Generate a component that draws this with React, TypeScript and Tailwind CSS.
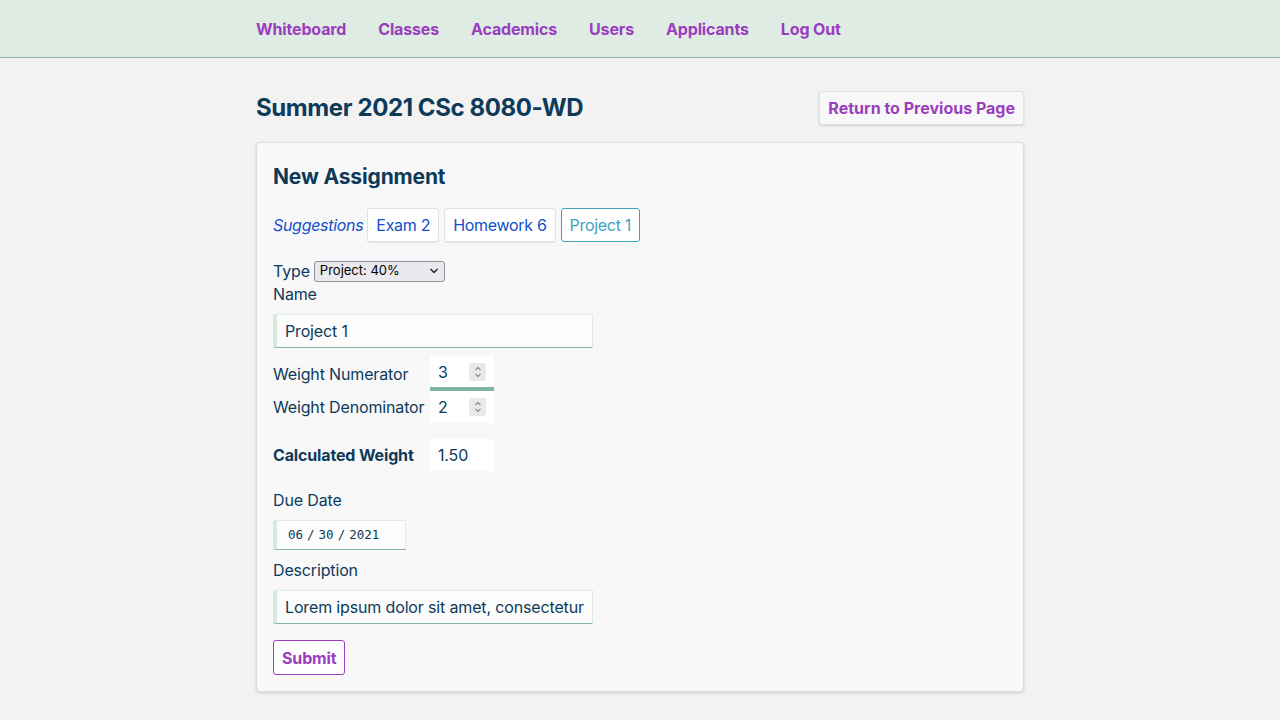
import React from "react";

const font = { fontFamily: "Inter, 'Noto Sans', sans-serif" };

function Spinner() {
  return (
    <div className="w-[17px] h-[18px] bg-[#e9e9ed] rounded-[2px] flex items-center justify-center">
      <svg width="10" height="14" viewBox="0 0 10 14" fill="none" stroke="#8a8a8a" strokeWidth="1.1">
        <path d="M2.5 5 L5 2.5 L7.5 5" />
        <path d="M2.5 9 L5 11.5 L7.5 9" />
      </svg>
    </div>
  );
}

export default function App() {
  const nav = ["Whiteboard", "Classes", "Academics", "Users", "Applicants", "Log Out"];
  return (
    <div className="min-h-[720px] bg-[#f2f2f2] text-[#0e3a5a] tracking-[-0.15px]" style={font}>
      <header className="h-[58px] bg-[#dfece3] border-b border-[#8fb5a8]">
        <nav className="w-[768px] mx-auto flex items-center h-full gap-[32px]">
          {nav.map((n) => (
            <span key={n} className="text-[#9a3dbf] font-bold text-[16px]">{n}</span>
          ))}
        </nav>
      </header>

      <main className="w-[768px] mx-auto">
        <div className="flex items-center justify-between mt-[32px] h-[36px]">
          <h1 className="text-[24px] font-bold text-[#0e3a5a] tracking-[-0.4px]">Summer 2021 CSc 8080-WD</h1>
          <button className="h-[34px] px-[8px] bg-[#f8f8f8] border border-[#e2e2e2] rounded-[3px] shadow-[0_1px_2px_rgba(0,0,0,0.15)] text-[#9a3dbf] font-bold text-[16px] tracking-normal">
            Return to Previous Page
          </button>
        </div>

        <section className="mt-[16px] bg-[#f8f8f8] border border-[#dedede] rounded-[4px] shadow-[0_1px_3px_rgba(0,0,0,0.15)] px-[16px] pt-[20px] pb-[16px]">
          <h2 className="text-[21px] font-bold leading-[28px]">New Assignment</h2>

          <div className="flex items-center gap-[5px] mt-[17px] h-[34px]">
            <span className="italic text-[#1450c8] text-[16px] mr-[-1px] tracking-[-0.3px]">Suggestions</span>
            <span className="h-[34px] px-[8px] flex items-center bg-white border border-[#e2e2e2] rounded-[3px] shadow-[0_1px_1px_rgba(0,0,0,0.08)] text-[#1450c8] text-[16px] tracking-[-0.3px]">Exam 2</span>
            <span className="h-[34px] px-[8px] flex items-center bg-white border border-[#e2e2e2] rounded-[3px] shadow-[0_1px_1px_rgba(0,0,0,0.08)] text-[#1450c8] text-[16px] tracking-[-0.3px]">Homework 6</span>
            <span className="h-[34px] px-[8px] flex items-center bg-white border border-[#3fa2bd] rounded-[3px] text-[#3fa2bd] text-[16px] tracking-[-0.3px]">Project 1</span>
          </div>

          <div className="flex items-center mt-[18px] h-[22px] text-[16px]">
            <span>Type</span>
            <span className="ml-[4px] w-[131px] h-[21px] bg-[#e9e9ee] border border-[#8f8f9d] rounded-[3px] flex items-center justify-between px-[5px] text-[13px] text-black tracking-normal">
              <span>Project: 40%</span>
              <svg width="10" height="8" viewBox="0 0 10 8" fill="none" stroke="#222" strokeWidth="1.5"><path d="M1.5 2 L5 5.5 L8.5 2" /></svg>
            </span>
          </div>
          <div className="text-[16px] h-[24px] leading-[24px] mt-[0px]">Name</div>
          <div className="mt-[8px] w-[320px] h-[34px] bg-[#fbfcfb] border border-[#dcede3] border-l-[4px] border-l-[#d5eadd] border-b-[#80b4a6] flex items-center px-[8px] text-[16px]">Project 1</div>

          <div className="grid grid-cols-[157px_64px] mt-[8px] items-center">
            <span className="text-[16px]">Weight Numerator</span>
            <div className="h-[35px] bg-white border-b-[4px] border-[#80b4a6] flex items-center justify-between pl-[8px] pr-[8px] text-[16px]">
              <span>3</span>
              <Spinner />
            </div>
            <span className="text-[16px] whitespace-nowrap">Weight Denominator</span>
            <div className="h-[32px] bg-white flex items-center justify-between pl-[8px] pr-[8px] text-[16px]">
              <span>2</span>
              <Spinner />
            </div>
            <span className="text-[16px] font-bold mt-[16px]">Calculated Weight</span>
            <div className="h-[32px] mt-[16px] bg-white flex items-center pl-[8px] text-[16px]">1.50</div>
          </div>

          <div className="text-[16px] mt-[17px] leading-[24px]">Due Date</div>
          <div className="mt-[8px] w-[133px] h-[30px] bg-[#fbfcfb] border border-[#dcede3] border-l-[4px] border-l-[#d5eadd] border-b-[#80b4a6] flex items-center gap-[4px] px-[11px] text-[12.5px] whitespace-nowrap tracking-normal" style={{ fontFamily: "'DejaVu Sans Mono', monospace" }}>
            <span>06</span><span>/</span><span>30</span><span>/</span><span>2021</span>
          </div>
          <div className="text-[16px] mt-[8px] leading-[24px]">Description</div>
          <div className="mt-[8px] w-[320px] h-[34px] bg-[#fbfcfb] border border-[#dcede3] border-l-[4px] border-l-[#d5eadd] border-b-[#80b4a6] flex items-center px-[8px] text-[16px] overflow-hidden whitespace-nowrap">Lorem ipsum dolor sit amet, consectetur</div>

          <button className="mt-[16px] h-[35px] px-[8px] border border-[#9a3dbf] rounded-[3px] bg-white text-[#9a3dbf] font-bold text-[16px]">Submit</button>
        </section>
      </main>
    </div>
  );
}
